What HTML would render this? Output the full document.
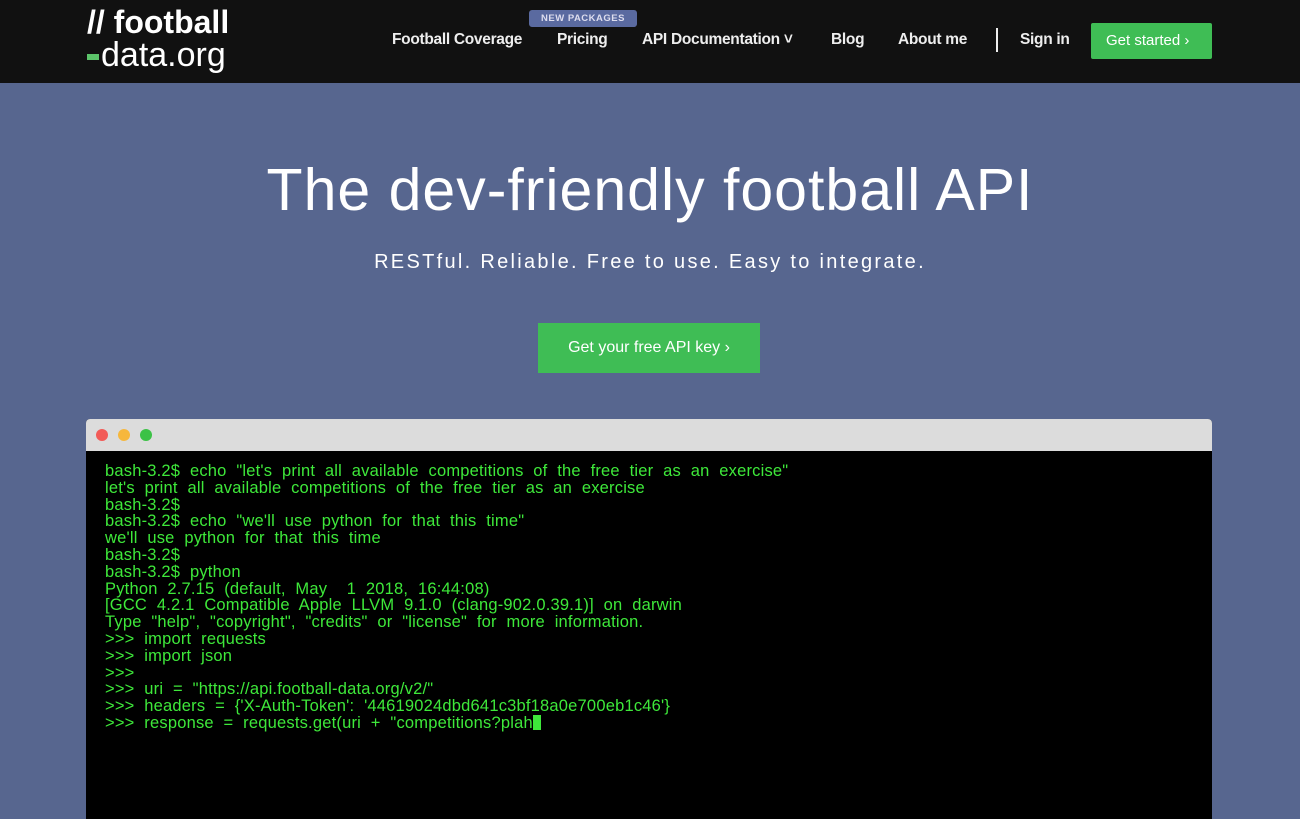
<!DOCTYPE html>
<html><head><meta charset="utf-8"><style>
*{margin:0;padding:0;box-sizing:border-box}
body{width:1300px;height:806px;overflow:hidden;background:#57668f;font-family:"Liberation Sans",sans-serif;position:relative}
.hdr{position:absolute;left:0;top:0;width:1300px;height:83px;background:#111}
.logo{position:absolute;left:87px;top:6px;color:#fff;font-size:34px;line-height:33px}
.logo b{font-size:32px}
.logo .g{display:inline-block;width:12px;height:6px;background:#5cc46a;vertical-align:middle;margin-right:2px}
.nav{position:absolute;top:31px;color:#eee;font-size:15.5px;font-weight:bold;letter-spacing:-.3px}
.badge{position:absolute;left:529px;top:10px;width:108px;height:17px;background:#5a6aa0;border-radius:3px;color:#dde;font-size:9.5px;font-weight:bold;text-align:center;line-height:17px;letter-spacing:.5px}
.sep{position:absolute;left:996px;top:28px;width:2px;height:24px;background:#eee}
.gs{position:absolute;left:1091px;top:23px;width:121px;height:36px;background:#3fbd55;color:#fff;font-size:15px;line-height:36px;padding-left:15px;border-radius:2px}
h1{position:absolute;left:0;width:1300px;top:156px;text-align:center;color:#fff;font-weight:normal;font-size:59px;letter-spacing:1px}
.sub{position:absolute;left:0;width:1300px;top:251px;text-align:center;color:#fff;font-size:20px;letter-spacing:2.3px}
.cta{position:absolute;left:538px;top:323px;width:222px;height:50px;background:#3fbd55;color:#fff;font-size:16px;line-height:50px;text-align:center}
.term{position:absolute;left:86px;top:419px;width:1126px;height:400px;background:#000;border-radius:4px 4px 0 0;overflow:hidden}
.bar{height:32px;background:#dcdcdc;position:relative}
.dot{position:absolute;top:10px;width:12px;height:12px;border-radius:50%}
pre{font-family:"Liberation Sans",sans-serif;color:#3ee83a;font-size:16.5px;line-height:16.8px;padding:12px 0 0 19px;white-space:pre;word-spacing:5px;letter-spacing:.2px}
.cur{background:#3ee83a;display:inline-block;width:8px;height:15px;vertical-align:-2px}
</style></head><body>
<div class="hdr">
<div class="logo"><b>// football</b><br><span class="g"></span>data.org</div>
<div class="badge">NEW PACKAGES</div>
<div class="nav" style="left:392px">Football Coverage</div>
<div class="nav" style="left:557px">Pricing</div>
<div class="nav" style="left:642px">API Documentation ˅</div>
<div class="nav" style="left:831px">Blog</div>
<div class="nav" style="left:898px">About me</div>
<div class="sep"></div>
<div class="nav" style="left:1020px">Sign in</div>
<div class="gs">Get started ›</div>
</div>
<h1>The dev-friendly football API</h1>
<div class="sub">RESTful. Reliable. Free to use. Easy to integrate.</div>
<div class="cta">Get your free API key ›</div>
<div class="term"><div class="bar">
<div class="dot" style="left:10px;background:#f25b57"></div>
<div class="dot" style="left:32px;background:#f6b73c"></div>
<div class="dot" style="left:54px;background:#3cc246"></div></div>
<pre>bash-3.2$ echo "let's print all available competitions of the free tier as an exercise"
let's print all available competitions of the free tier as an exercise
bash-3.2$
bash-3.2$ echo "we'll use python for that this time"
we'll use python for that this time
bash-3.2$
bash-3.2$ python
Python 2.7.15 (default, May  1 2018, 16:44:08)
[GCC 4.2.1 Compatible Apple LLVM 9.1.0 (clang-902.0.39.1)] on darwin
Type "help", "copyright", "credits" or "license" for more information.
&gt;&gt;&gt; import requests
&gt;&gt;&gt; import json
&gt;&gt;&gt;
&gt;&gt;&gt; uri = "https://api.football-data.org/v2/"
&gt;&gt;&gt; headers = {'X-Auth-Token': '44619024dbd641c3bf18a0e700eb1c46'}
&gt;&gt;&gt; response = requests.get(uri + "competitions?plah<span class="cur"></span></pre>
</div>
</body></html>
